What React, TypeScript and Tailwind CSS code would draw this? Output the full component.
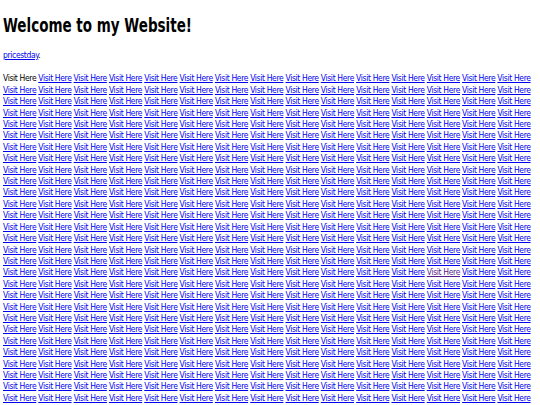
const COUNT = 435;
const VISITED = 17 * 15 + 12;

export default function App() {
  return (
    <div className="bg-white px-[3px] pt-[14px] text-black" style={{ fontFamily: '"DejaVu Sans Condensed", "DejaVu Sans", sans-serif', fontStretch: "condensed" }}>
      <h1 className="origin-left scale-x-[0.79] text-[19px] font-bold leading-[22px]">Welcome to my Website!</h1>
      <p className="mt-[14px] text-[8.5px] leading-[11.4px] tracking-[-0.36px]">
        <a href="#" className="text-[#0000ee] underline">pricestday</a>.
      </p>
      <p className="mt-[12px] w-[536px] text-[8.5px] leading-[11.4px] tracking-[-0.36px]">
        {Array.from({ length: COUNT }, (_, i) =>
          i === 0 ? (
            <span key={i}>Visit Here </span>
          ) : (
            <span key={i}>
              <a href="#" className={i === VISITED ? "text-[#551a8b] underline" : "text-[#0000ee] underline"}>
                Visit Here
              </a>{" "}
            </span>
          )
        )}
      </p>
    </div>
  );
}
